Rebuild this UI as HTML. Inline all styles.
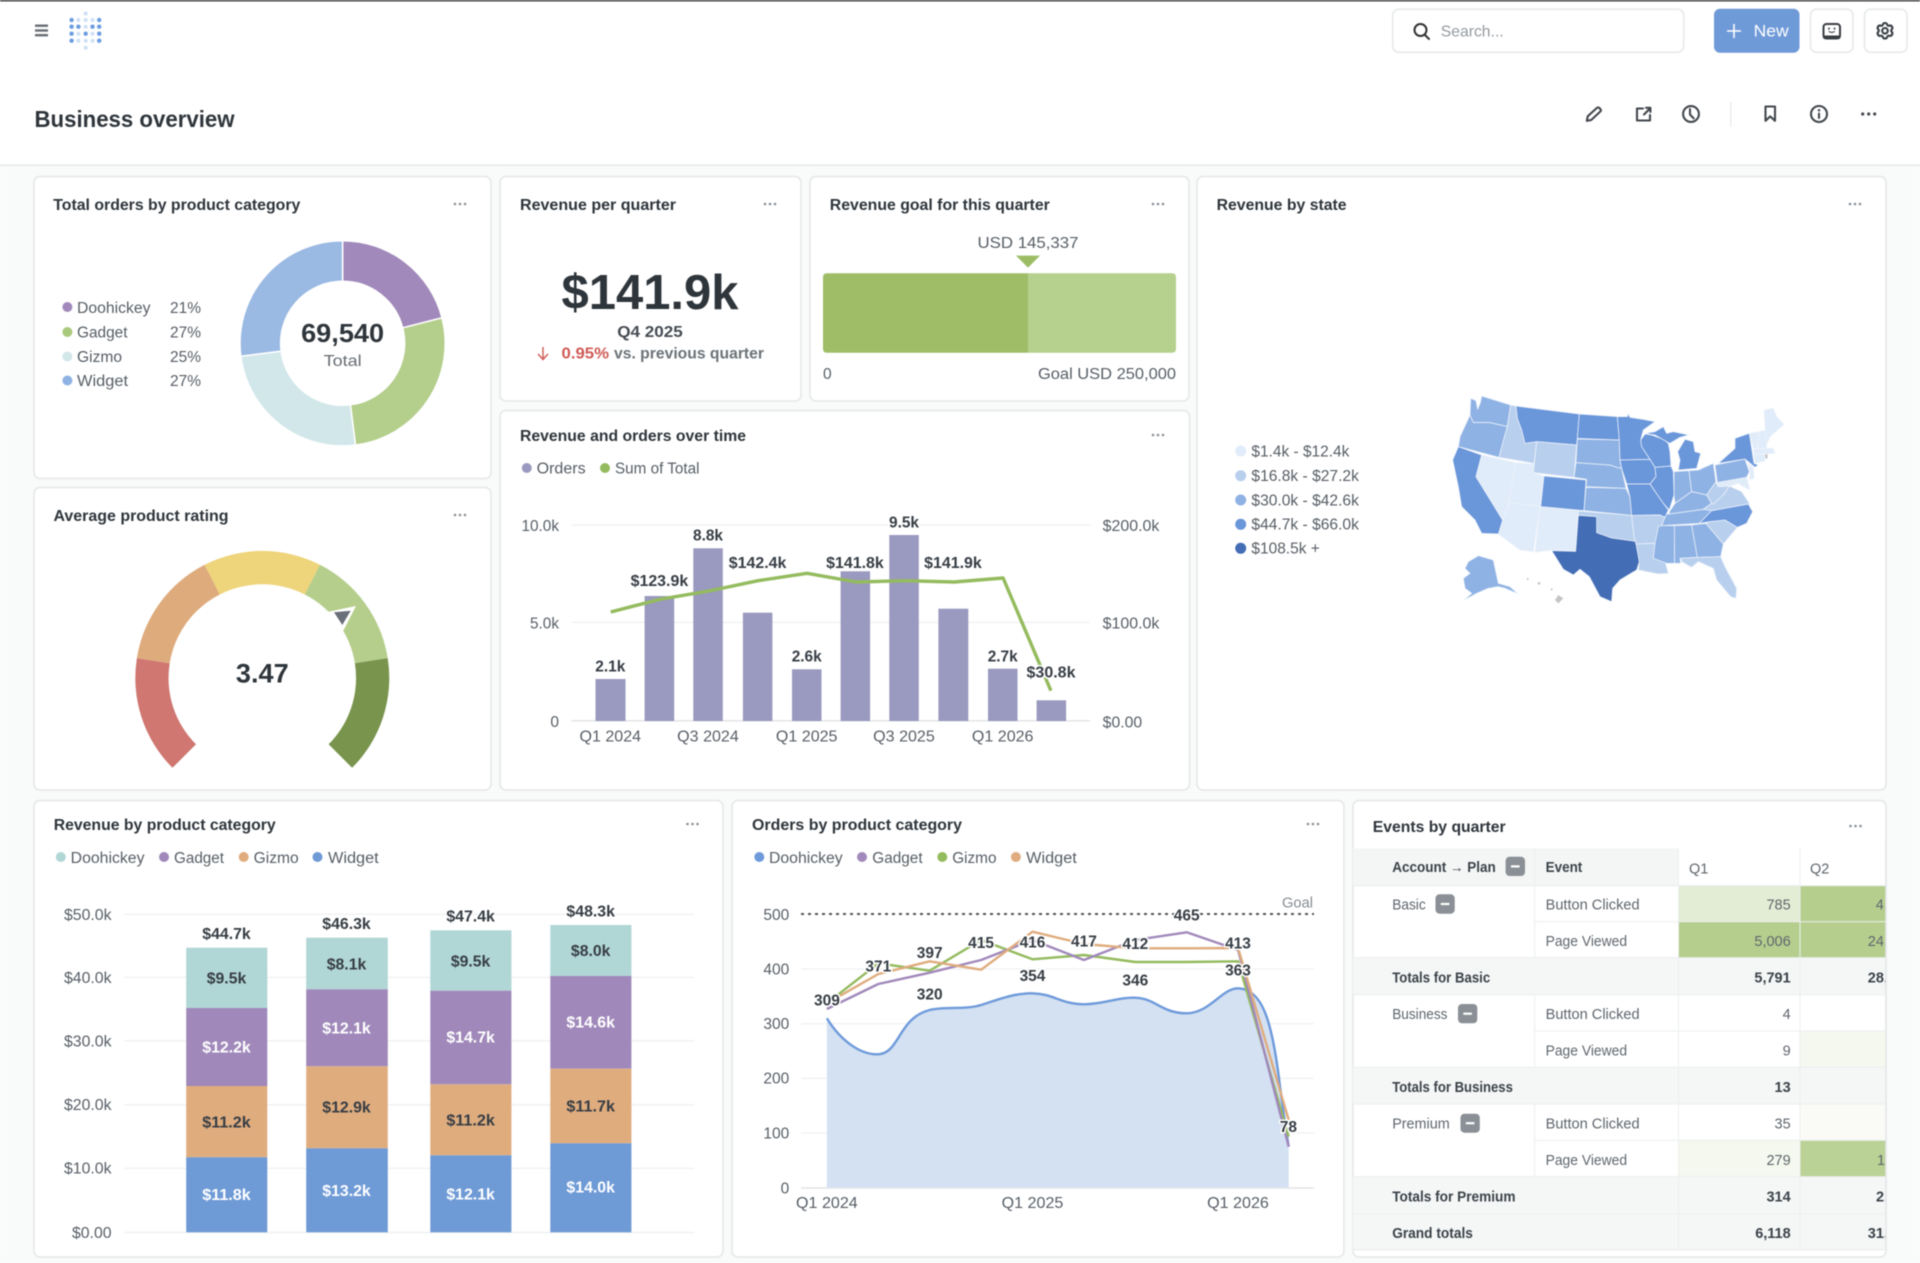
<!DOCTYPE html>
<html lang="en"><head><meta charset="utf-8"><title>Business overview</title>
<style>
html,body{margin:0;padding:0;background:#fff}
svg{display:block;filter:blur(.45px)}
text{font-family:"Liberation Sans",sans-serif}
.t{font-size:16px;font-weight:700;fill:#2E353B}
.a{font-size:15.5px;fill:#575E66}
.d{font-size:15.5px;font-weight:700;fill:#363D44}
.w{font-size:15.5px;font-weight:700;fill:#fff}
.h{paint-order:stroke;stroke:#fff;stroke-width:3px;stroke-linejoin:round}
.c{font-size:14.5px;fill:#5F666D}
.b{font-size:14.5px;font-weight:700;fill:#3B4248}
.m{fill:#8A9096}
.i{fill:none;stroke:#43484E;stroke-width:2.1;stroke-linecap:round;stroke-linejoin:round}
.card{fill:#fff;stroke:#E4E6E8;stroke-width:1.5}
.l1{fill:#E0ECF9}.l2{fill:#B8CFEE}.l3{fill:#8FB2E4}.l4{fill:#6A96DA}.l5{fill:#436DB5}
</style></head><body>
<svg xmlns="http://www.w3.org/2000/svg" width="1920" height="1263" viewBox="0 0 1920 1263">
<defs><clipPath id="tc"><rect x="1353" y="840" width="533" height="412"/></clipPath></defs>
<rect width="1920" height="1263" fill="#F9FAFA"/>
<rect width="1920" height="165" fill="#fff"/>
<rect y="164.5" width="1920" height="1.5" fill="#E6E8EA"/>
<rect width="1920" height="1.5" fill="#444"/>

<!-- nav -->
<g fill="#6A6F75"><rect x="35" y="24.5" width="13" height="2.4"/><rect x="35" y="29.3" width="13" height="2.4"/><rect x="35" y="34" width="13" height="2.4"/></g>
<g fill="#6B9DE0">
<circle cx="71.6" cy="20" r="2.2"/><circle cx="99.2" cy="20" r="2.2"/>
<circle cx="71.6" cy="26.7" r="2.2"/><circle cx="78.4" cy="26.7" r="2.2"/><circle cx="92.5" cy="26.7" r="2.2"/><circle cx="99.2" cy="26.7" r="2.2"/>
<circle cx="71.6" cy="33.7" r="2.2"/><circle cx="85.7" cy="33.7" r="2.2"/><circle cx="99.2" cy="33.7" r="2.2"/>
<circle cx="71.6" cy="40.7" r="2.2"/><circle cx="99.2" cy="40.7" r="2.2"/></g>
<g fill="#CFE0F6">
<circle cx="85.7" cy="13.5" r="2"/><circle cx="85.7" cy="47.7" r="2"/>
<circle cx="78.4" cy="20" r="2"/><circle cx="85.7" cy="20" r="2"/><circle cx="92.5" cy="20" r="2"/>
<circle cx="85.7" cy="26.7" r="2"/><circle cx="78.4" cy="33.7" r="2"/><circle cx="92.5" cy="33.7" r="2"/>
<circle cx="78.4" cy="40.7" r="2"/><circle cx="85.7" cy="40.7" r="2"/><circle cx="92.5" cy="40.7" r="2"/></g>

<rect x="1392.7" y="9.2" width="291" height="43" rx="6" fill="#fff" stroke="#E6E8EA" stroke-width="1.5"/>
<circle cx="1420.5" cy="30" r="6" fill="none" stroke="#333" stroke-width="2"/><path d="M1425 35 L1429 39" stroke="#333" stroke-width="2" stroke-linecap="round"/>
<text x="1440.7" y="36.5" font-size="16" fill="#949AA0" textLength="63" lengthAdjust="spacingAndGlyphs">Search...</text>
<rect x="1714" y="8.7" width="85.5" height="44" rx="6" fill="#6F9AD8"/>
<path d="M1727 31 H1741 M1734 24 V38" stroke="#fff" stroke-width="1.6"/>
<text x="1753.6" y="36.5" font-size="17" fill="#fff" textLength="35" lengthAdjust="spacingAndGlyphs">New</text>
<rect x="1810.5" y="9.2" width="42.5" height="43" rx="6" fill="#fff" stroke="#E6E8EA" stroke-width="1.5"/>
<rect x="1864.5" y="9.2" width="42.5" height="43" rx="6" fill="#fff" stroke="#E6E8EA" stroke-width="1.5"/>
<rect x="1823.5" y="24" width="16.5" height="14.5" rx="3" fill="none" stroke="#3A3F45" stroke-width="2"/>
<rect x="1823" y="35.5" width="17.5" height="3.4" rx="1.5" fill="#3A3F45"/>
<circle cx="1829" cy="28.6" r="1" fill="#3A3F45"/><circle cx="1834.5" cy="28.6" r="1" fill="#3A3F45"/><path d="M1828.7 31.3 Q1831.7 33.5 1834.8 31.3" fill="none" stroke="#3A3F45" stroke-width="1.1"/>
<path d="M1885 23 Q1886.8 23 1887.3 24.8 Q1887.7 26 1889 25.7 Q1891 25 1892 26.7 Q1893 28.4 1891.6 29.6 Q1890.6 30.5 1891.6 31.6 Q1893 33 1892 34.7 Q1891 36.4 1889 35.8 Q1887.7 35.4 1887.3 36.8 Q1886.8 38.6 1885 38.6 Q1883.2 38.6 1882.7 36.8 Q1882.3 35.4 1881 35.8 Q1879 36.4 1878 34.7 Q1877 33 1878.4 31.6 Q1879.4 30.5 1878.4 29.6 Q1877 28.4 1878 26.7 Q1879 25 1881 25.7 Q1882.3 26 1882.7 24.8 Q1883.2 23 1885 23 Z" fill="none" stroke="#3A3F45" stroke-width="2.1" stroke-linejoin="round"/>
<circle cx="1885" cy="30.8" r="2.8" fill="none" stroke="#3A3F45" stroke-width="2.1"/>

<!-- page header -->
<text x="34.5" y="127" font-size="23.5" font-weight="700" fill="#2E353B" textLength="200" lengthAdjust="spacingAndGlyphs">Business overview</text>
<path class="i" d="M1586.8 120.8 L1587.8 116.2 L1596.8 108 Q1598.2 106.8 1599.6 108.2 L1600.3 109 Q1601.5 110.4 1600.2 111.6 L1591.2 120 Z"/>
<path class="i" d="M1643 108.5 H1637 V120.5 H1650 V115 M1644 114.5 L1650 108.5 M1646 107.8 H1650.4 V112"/>
<circle class="i" cx="1691" cy="114" r="7.9"/><path class="i" d="M1690 109 V114.5 L1693.7 118.4"/>
<rect x="1730.2" y="102" width="1.2" height="25" fill="#E6E8EA"/>
<path class="i" d="M1765.5 106.5 H1775 V120.8 L1770.2 116.4 L1765.5 120.8 Z"/>
<circle class="i" cx="1819" cy="114" r="8"/><circle cx="1819" cy="110.3" r="1.25" fill="#43484E"/><path class="i" d="M1819 113.5 V118"/>
<g fill="#43484E"><circle cx="1862.7" cy="114" r="1.6"/><circle cx="1868.7" cy="114" r="1.6"/><circle cx="1874.7" cy="114" r="1.6"/></g>

<!-- cards -->
<rect class="card" x="34" y="176.5" width="457" height="302" rx="6"/>
<rect class="card" x="34" y="487.5" width="457" height="302.5" rx="6"/>
<rect class="card" x="500" y="176.5" width="301" height="224.5" rx="6"/>
<rect class="card" x="810" y="176.5" width="379" height="224.5" rx="6"/>
<rect class="card" x="500" y="410.5" width="689.5" height="379.5" rx="6"/>
<rect class="card" x="1197" y="176.5" width="689" height="613.5" rx="6"/>
<rect class="card" x="34" y="800.5" width="689" height="456.5" rx="6"/>
<rect class="card" x="732" y="800.5" width="612" height="456.5" rx="6"/>
<rect class="card" x="1353" y="800.5" width="533" height="456.5" rx="6"/>

<!-- titles -->
<text class="t" x="53.3" y="210" textLength="247" lengthAdjust="spacingAndGlyphs">Total orders by product category</text>
<text class="t" x="520" y="210" textLength="156" lengthAdjust="spacingAndGlyphs">Revenue per quarter</text>
<text class="t" x="829.8" y="210" textLength="220" lengthAdjust="spacingAndGlyphs">Revenue goal for this quarter</text>
<text class="t" x="1216.6" y="210" textLength="130" lengthAdjust="spacingAndGlyphs">Revenue by state</text>
<text class="t" x="53.5" y="521" textLength="175" lengthAdjust="spacingAndGlyphs">Average product rating</text>
<text class="t" x="520" y="441" textLength="226" lengthAdjust="spacingAndGlyphs">Revenue and orders over time</text>
<text class="t" x="53.7" y="830" textLength="222" lengthAdjust="spacingAndGlyphs">Revenue by product category</text>
<text class="t" x="752" y="830" textLength="210" lengthAdjust="spacingAndGlyphs">Orders by product category</text>
<text class="t" x="1372.7" y="832" textLength="133" lengthAdjust="spacingAndGlyphs">Events by quarter</text>

<!-- card dots -->
<g fill="#8A9096">
<circle cx="455" cy="204" r="1.3"/><circle cx="460" cy="204" r="1.3"/><circle cx="465" cy="204" r="1.3"/>
<circle cx="765" cy="204" r="1.3"/><circle cx="770" cy="204" r="1.3"/><circle cx="775" cy="204" r="1.3"/>
<circle cx="1153" cy="204" r="1.3"/><circle cx="1158" cy="204" r="1.3"/><circle cx="1163" cy="204" r="1.3"/>
<circle cx="1850" cy="204" r="1.3"/><circle cx="1855" cy="204" r="1.3"/><circle cx="1860" cy="204" r="1.3"/>
<circle cx="455" cy="515" r="1.3"/><circle cx="460" cy="515" r="1.3"/><circle cx="465" cy="515" r="1.3"/>
<circle cx="1153" cy="435" r="1.3"/><circle cx="1158" cy="435" r="1.3"/><circle cx="1163" cy="435" r="1.3"/>
<circle cx="687.5" cy="824" r="1.3"/><circle cx="692.5" cy="824" r="1.3"/><circle cx="697.5" cy="824" r="1.3"/>
<circle cx="1308" cy="824" r="1.3"/><circle cx="1313" cy="824" r="1.3"/><circle cx="1318" cy="824" r="1.3"/>
<circle cx="1850.5" cy="826" r="1.3"/><circle cx="1855.5" cy="826" r="1.3"/><circle cx="1860.5" cy="826" r="1.3"/>
</g>

<!-- donut -->
<g stroke="#fff" stroke-width="1.5">
<path fill="#A189BB" d="M342.6 240.7 A102.6 102.6 0 0 1 442 317.8 L402.7 327.9 A62 62 0 0 0 342.6 281.3 Z"/>
<path fill="#B4CE8B" d="M442 317.8 A102.6 102.6 0 0 1 355.5 445.1 L350.4 404.8 A62 62 0 0 0 402.7 327.9 Z"/>
<path fill="#D2E7EA" d="M355.5 445.1 A102.6 102.6 0 0 1 240.8 356.2 L281.1 351.1 A62 62 0 0 0 350.4 404.8 Z"/>
<path fill="#9AB9E3" d="M240.8 356.2 A102.6 102.6 0 0 1 342.6 240.7 L342.6 281.3 A62 62 0 0 0 281.1 351.1 Z"/>
</g>
<text x="342.6" y="342" text-anchor="middle" font-size="26" font-weight="700" fill="#2E353B" textLength="83" lengthAdjust="spacingAndGlyphs">69,540</text>
<text x="342.6" y="366" text-anchor="middle" font-size="15.5" fill="#666C72" textLength="38" lengthAdjust="spacingAndGlyphs">Total</text>
<circle cx="67.4" cy="307" r="5" fill="#A189BB"/><circle cx="67.4" cy="332" r="5" fill="#A9C97C"/><circle cx="67.4" cy="356.5" r="5" fill="#D2E7EA"/><circle cx="67.4" cy="380.5" r="5" fill="#8FB2E4"/>
<text class="a" x="77" y="313" textLength="73.5" lengthAdjust="spacingAndGlyphs">Doohickey</text>
<text class="a" x="77" y="337.5" textLength="50.5" lengthAdjust="spacingAndGlyphs">Gadget</text>
<text class="a" x="77" y="362" textLength="45" lengthAdjust="spacingAndGlyphs">Gizmo</text>
<text class="a" x="77" y="386" textLength="51" lengthAdjust="spacingAndGlyphs">Widget</text>
<text class="a" x="170" y="313" textLength="31" lengthAdjust="spacingAndGlyphs">21%</text>
<text class="a" x="170" y="337.5" textLength="31" lengthAdjust="spacingAndGlyphs">27%</text>
<text class="a" x="170" y="362" textLength="31" lengthAdjust="spacingAndGlyphs">25%</text>
<text class="a" x="170" y="386" textLength="31" lengthAdjust="spacingAndGlyphs">27%</text>

<!-- KPI -->
<text x="650" y="309" text-anchor="middle" font-size="49" font-weight="700" fill="#2E353B" textLength="177" lengthAdjust="spacingAndGlyphs">$141.9k</text>
<text x="650" y="337" text-anchor="middle" font-size="15.5" font-weight="700" fill="#454B52" textLength="65.5" lengthAdjust="spacingAndGlyphs">Q4 2025</text>
<path d="M543 347 V359 M538 354 L543 359.5 L548 354" fill="none" stroke="#D0605A" stroke-width="1.5"/>
<text x="561.5" y="358.5" font-size="15.5" font-weight="700" fill="#CF5A55" textLength="47.5" lengthAdjust="spacingAndGlyphs">0.95%</text>
<text x="614" y="358.5" font-size="15.5" font-weight="700" fill="#6C7378" textLength="150" lengthAdjust="spacingAndGlyphs">vs. previous quarter</text>

<!-- goal -->
<text class="a" x="1028" y="248" text-anchor="middle" textLength="101" lengthAdjust="spacingAndGlyphs">USD 145,337</text>
<path d="M1016 255.6 H1040 L1028 267.6 Z" fill="#9BBC63"/>
<path d="M827 273.3 H1028 V352.7 H827 Q823 352.7 823 348.7 V277.3 Q823 273.3 827 273.3 Z" fill="#9FBD67"/>
<path d="M1028 273.3 H1172 Q1176 273.3 1176 277.3 V348.7 Q1176 352.7 1172 352.7 H1028 Z" fill="#B6D08D"/>
<text class="a" x="823" y="379">0</text>
<text class="a" x="1176" y="379" text-anchor="end" textLength="138" lengthAdjust="spacingAndGlyphs">Goal USD 250,000</text>

<!-- gauge -->
<path fill="#CF7770" d="M172.5 767.8 A127 127 0 0 1 136.9 658.1 L169.7 663.3 A93.7 93.7 0 0 0 196 744.3 Z"/>
<path fill="#DEAB7D" d="M136.9 658.1 A127 127 0 0 1 204.6 564.8 L219.8 594.5 A93.7 93.7 0 0 0 169.7 663.3 Z"/>
<path fill="#EED47B" d="M204.6 564.8 A127 127 0 0 1 320 564.8 L304.8 594.5 A93.7 93.7 0 0 0 219.8 594.5 Z"/>
<path fill="#B5CE8B" d="M320 564.8 A127 127 0 0 1 387.7 658.1 L354.9 663.3 A93.7 93.7 0 0 0 304.8 594.5 Z"/>
<path fill="#79944D" d="M387.7 658.1 A127 127 0 0 1 352.1 767.8 L328.6 744.3 A93.7 93.7 0 0 0 354.9 663.3 Z"/>
<path d="M328.3 611.7 L356 606 L343.3 630.7 Z" fill="#fff"/>
<path d="M334 612.3 L350.7 610.7 L342.3 625 Z" fill="#6A6F7A"/>
<text x="262.3" y="682.7" text-anchor="middle" font-size="27" font-weight="700" fill="#2E353B" textLength="52.7" lengthAdjust="spacingAndGlyphs">3.47</text>

<!-- combo chart -->
<circle cx="526.8" cy="468" r="5" fill="#9A99BF"/><circle cx="605" cy="468" r="5" fill="#94BB5E"/>
<text class="a" x="536.6" y="473.5" textLength="49" lengthAdjust="spacingAndGlyphs">Orders</text>
<text class="a" x="615" y="473.5" textLength="84.5" lengthAdjust="spacingAndGlyphs">Sum of Total</text>
<g fill="#EEF0F1"><rect x="571.4" y="524.5" width="518.6" height="1.2"/><rect x="571.4" y="621.8" width="518.6" height="1.2"/><rect x="571.4" y="720" width="518.6" height="1.6" fill="#E4E6E8"/></g>
<g fill="#9A99BF">
<rect x="595.5" y="679" width="30" height="42"/><rect x="644.6" y="596" width="29.6" height="125"/><rect x="693.3" y="548.3" width="29.5" height="172.7"/><rect x="742.9" y="612.7" width="29.5" height="108.3"/><rect x="792" y="669.3" width="29.5" height="51.7"/><rect x="840.6" y="571.3" width="29.5" height="149.7"/><rect x="889.3" y="535" width="29.5" height="186"/><rect x="938.4" y="608.7" width="29.9" height="112.3"/><rect x="988" y="668.7" width="29.5" height="52.3"/><rect x="1036.6" y="700.3" width="29.5" height="20.7"/></g>
<polyline points="610.7,612 659.8,599.3 708.9,591 758,580.7 807.1,573.3 856.3,582 905.4,580.7 954,582 1003.1,578 1050.9,690.7" fill="none" stroke="#94BB5E" stroke-width="3.4" stroke-linejoin="round"/>
<g class="a" text-anchor="end">
<text x="559" y="531" textLength="37.5" lengthAdjust="spacingAndGlyphs">10.0k</text>
<text x="559" y="628.5" textLength="29" lengthAdjust="spacingAndGlyphs">5.0k</text>
<text x="559" y="727">0</text></g>
<g class="a">
<text x="1102.7" y="531" textLength="56.7" lengthAdjust="spacingAndGlyphs">$200.0k</text>
<text x="1102.7" y="628.5" textLength="56.7" lengthAdjust="spacingAndGlyphs">$100.0k</text>
<text x="1102.7" y="727.5" textLength="39.5" lengthAdjust="spacingAndGlyphs">$0.00</text>
<g text-anchor="middle">
<text x="610.3" y="741.5" textLength="61.6" lengthAdjust="spacingAndGlyphs">Q1 2024</text>
<text x="708" y="741.5" textLength="61.6" lengthAdjust="spacingAndGlyphs">Q3 2024</text>
<text x="806.7" y="741.5" textLength="61.6" lengthAdjust="spacingAndGlyphs">Q1 2025</text>
<text x="904" y="741.5" textLength="61.6" lengthAdjust="spacingAndGlyphs">Q3 2025</text>
<text x="1002.7" y="741.5" textLength="61.6" lengthAdjust="spacingAndGlyphs">Q1 2026</text>
</g></g>
<g class="d" text-anchor="middle">
<text class="h" x="610.3" y="671.5" textLength="30" lengthAdjust="spacingAndGlyphs">2.1k</text>
<text class="h" x="659.4" y="586" textLength="57.6" lengthAdjust="spacingAndGlyphs">$123.9k</text>
<text class="h" x="708" y="540.5" textLength="30" lengthAdjust="spacingAndGlyphs">8.8k</text>
<text class="h" x="757.6" y="568" textLength="57.6" lengthAdjust="spacingAndGlyphs">$142.4k</text>
<text class="h" x="806.7" y="661.5" textLength="30" lengthAdjust="spacingAndGlyphs">2.6k</text>
<text class="h" x="855" y="568" textLength="57.6" lengthAdjust="spacingAndGlyphs">$141.8k</text>
<text class="h" x="904" y="527.5" textLength="30" lengthAdjust="spacingAndGlyphs">9.5k</text>
<text class="h" x="953" y="568" textLength="57.6" lengthAdjust="spacingAndGlyphs">$141.9k</text>
<text class="h" x="1002.7" y="661.5" textLength="30" lengthAdjust="spacingAndGlyphs">2.7k</text>
<text class="h" x="1051" y="677.5" textLength="49" lengthAdjust="spacingAndGlyphs">$30.8k</text>
</g>

<!-- map legend -->
<circle class="l1" cx="1240.7" cy="451" r="5.5"/><circle class="l2" cx="1240.7" cy="475.7" r="5.5"/><circle class="l3" cx="1240.7" cy="500" r="5.5"/><circle class="l4" cx="1240.7" cy="524.3" r="5.5"/><circle class="l5" cx="1240.7" cy="548.3" r="5.5"/>
<text class="a" x="1251.4" y="456.5" textLength="98" lengthAdjust="spacingAndGlyphs">$1.4k - $12.4k</text>
<text class="a" x="1251.4" y="481" textLength="107.5" lengthAdjust="spacingAndGlyphs">$16.8k - $27.2k</text>
<text class="a" x="1251.4" y="505.5" textLength="107.5" lengthAdjust="spacingAndGlyphs">$30.0k - $42.6k</text>
<text class="a" x="1251.4" y="529.5" textLength="107.5" lengthAdjust="spacingAndGlyphs">$44.7k - $66.0k</text>
<text class="a" x="1251.4" y="553.5" textLength="68.4" lengthAdjust="spacingAndGlyphs">$108.5k +</text>

<!-- map -->
<g transform="translate(1430 380) scale(.33333)" stroke="#EEF3FB" stroke-width="2.2" stroke-linejoin="round">
<polygon class="l3" points="122,55 138,62 143,88 151,68 155,48 242,75 232,140 180,128 130,128 120,105"/>
<polygon class="l3" points="120,105 130,128 180,128 232,140 222,175 207,232 85,200 90,170"/>
<polygon class="l2" points="242,75 258,78 262,115 275,150 285,190 320,185 312,250 207,232 222,175 232,140"/>
<polygon class="l4" points="258,78 448,102 442,175 440,195 320,185 285,190 275,150 262,115"/>
<polygon class="l2" points="320,185 440,195 432,292 310,278"/>
<polygon class="l4" points="85,200 155,225 138,290 218,420 208,462 155,460 135,420 95,380 85,320 68,240"/>
<polygon class="l1" points="155,225 258,248 232,385 218,420 138,290"/>
<polygon class="l1" points="258,248 312,252 310,278 342,288 330,380 238,367 232,385"/>
<polygon class="l1" points="232,385 238,367 330,380 310,515 270,510 205,462 218,420"/>
<polygon class="l4" points="342,288 468,300 462,392 332,380"/>
<polygon class="l1" points="330,380 445,392 437,513 365,510 315,517"/>
<polygon class="l2" points="445,393 605,406 612,470 618,492 575,482 540,474 500,458 500,410 445,406"/>
<polygon class="l5" points="445,406 500,410 500,458 545,474 618,484 628,545 620,570 570,600 548,625 545,665 510,650 478,590 450,568 430,585 400,568 365,512 437,514"/>
<polygon class="l3" points="468,322 588,325 600,350 605,406 462,392"/>
<polygon class="l3" points="438,248 540,255 560,262 575,265 588,325 468,320 470,298 432,292"/>
<polygon class="l3" points="442,177 568,180 570,240 575,265 560,262 540,255 438,248"/>
<polygon class="l4" points="448,102 562,110 568,180 442,175"/>
<polygon class="l4" points="562,110 592,110 595,100 600,112 640,118 675,125 640,150 632,180 635,200 660,238 570,240 568,180"/>
<polygon class="l4" points="570,240 660,238 675,262 678,290 660,312 590,312 575,265"/>
<polygon class="l4" points="590,312 660,312 700,370 715,390 705,412 690,405 605,406 600,350"/>
<polygon class="l2" points="605,406 690,405 705,412 695,437 675,490 618,492 612,470"/>
<polygon class="l2" points="618,492 675,490 670,535 705,545 715,580 685,582 625,570 628,545"/>
<polygon class="l4" points="632,180 645,162 665,165 700,178 715,190 720,215 723,258 675,262 660,238 635,200"/>
<polygon class="l4" points="645,160 675,155 700,140 710,160 730,155 777,165 750,172 720,190 710,185 675,165"/>
<polygon class="l4" points="745,270 750,240 743,215 765,178 790,185 795,215 812,220 800,265"/>
<polygon class="l4" points="675,262 723,258 730,275 732,345 718,390 700,370 660,312 678,290"/>
<polygon class="l3" points="732,275 777,272 785,335 735,370 732,345"/>
<polygon class="l3" points="777,272 805,270 850,250 858,305 830,345 785,335"/>
<polygon class="l3" points="718,395 735,370 785,335 830,345 845,370 820,388 718,402"/>
<polygon class="l3" points="710,402 718,402 820,388 850,390 808,430 695,437 705,412"/>
<polygon class="l3" points="685,440 695,437 733,437 734,550 710,550 670,535 675,490"/>
<polygon class="l3" points="733,437 785,435 802,532 750,535 752,550 734,550"/>
<polygon class="l3" points="785,435 828,430 880,492 872,530 802,532"/>
<polygon class="l2" points="752,535 802,532 872,530 885,560 920,625 918,655 902,650 860,600 850,565 805,545 785,562 755,545"/>
<polygon class="l2" points="828,430 840,425 885,420 922,442 880,492"/>
<polygon class="l4" points="808,430 845,392 955,372 968,395 950,430 922,442 885,420 840,425"/>
<polygon class="l2" points="820,388 845,370 880,345 898,318 935,335 958,370 955,372 845,392"/>
<polygon class="l2" points="830,345 858,305 865,320 898,318 880,345 850,372 845,370"/>
<polygon class="l3" points="855,255 945,237 958,275 950,292 862,308"/>
<polygon class="l4" points="865,250 915,205 915,175 958,160 972,250 985,255 975,262 945,237"/>
<polygon class="l1" points="955,250 970,262 972,295 958,300 960,280"/>
<polygon class="l1" points="862,308 950,292 960,330 940,320 925,310 898,318 865,320"/>
<polygon class="l1" points="958,160 988,155 982,205 970,205"/>
<polygon class="l1" points="988,155 1008,150 1010,205 982,205"/>
<polygon class="l1" points="1002,90 1030,85 1040,110 1062,133 1020,170 1010,195 1005,140"/>
<polygon class="l1" points="970,207 1030,205 1035,220 972,222"/>
<polygon class="l1" points="972,222 1005,222 1005,243 975,250"/>
<polygon fill="#BFBFBF" points="1005,222 1013,222 1013,236 1005,236"/>
<polygon class="l3" points="115,545 145,527 190,540 205,610 240,620 265,642 225,625 205,620 175,625 140,640 100,662 125,640 105,625 100,595 120,580 105,565"/>
<g fill="#C5C5C5" stroke="none"><polygon points="385,645 400,655 385,670 375,660"/><circle cx="293" cy="597" r="3"/><circle cx="327" cy="610" r="4"/><circle cx="365" cy="628" r="3"/></g>
</g>

<!-- stacked chart -->
<circle cx="60.8" cy="857" r="5" fill="#B1D6D6"/><circle cx="164" cy="857" r="5" fill="#A089BA"/><circle cx="243.7" cy="857" r="5" fill="#DFAC7E"/><circle cx="317.5" cy="857" r="5" fill="#6E9AD6"/>
<text class="a" x="70.7" y="863" textLength="73.8" lengthAdjust="spacingAndGlyphs">Doohickey</text>
<text class="a" x="174" y="863" textLength="50" lengthAdjust="spacingAndGlyphs">Gadget</text>
<text class="a" x="253.7" y="863" textLength="45" lengthAdjust="spacingAndGlyphs">Gizmo</text>
<text class="a" x="328" y="863" textLength="50.7" lengthAdjust="spacingAndGlyphs">Widget</text>
<g fill="#EEF0F1"><rect x="124" y="913.8" width="570" height="1.2"/><rect x="124" y="976.8" width="570" height="1.2"/><rect x="124" y="1040.2" width="570" height="1.2"/><rect x="124" y="1104.2" width="570" height="1.2"/><rect x="124" y="1167.8" width="570" height="1.2"/><rect x="124" y="1231.8" width="570" height="1.4"/></g>
<g class="a" text-anchor="end">
<text x="111.5" y="920" textLength="47.5" lengthAdjust="spacingAndGlyphs">$50.0k</text>
<text x="111.5" y="983" textLength="47.5" lengthAdjust="spacingAndGlyphs">$40.0k</text>
<text x="111.5" y="1046.5" textLength="47.5" lengthAdjust="spacingAndGlyphs">$30.0k</text>
<text x="111.5" y="1110" textLength="47.5" lengthAdjust="spacingAndGlyphs">$20.0k</text>
<text x="111.5" y="1173.5" textLength="47.5" lengthAdjust="spacingAndGlyphs">$10.0k</text>
<text x="111.5" y="1238" textLength="39.5" lengthAdjust="spacingAndGlyphs">$0.00</text></g>
<g>
<rect fill="#B1D6D6" x="186.2" y="947.7" width="81.1" height="60.3"/><rect fill="#A089BA" x="186.2" y="1008" width="81.1" height="78"/><rect fill="#DFAC7E" x="186.2" y="1086" width="81.1" height="71.3"/><rect fill="#6E9AD6" x="186.2" y="1157.3" width="81.1" height="75"/>
<rect fill="#B1D6D6" x="306.2" y="937.7" width="81.6" height="51.6"/><rect fill="#A089BA" x="306.2" y="989.3" width="81.6" height="77"/><rect fill="#DFAC7E" x="306.2" y="1066.3" width="81.6" height="82"/><rect fill="#6E9AD6" x="306.2" y="1148.3" width="81.6" height="84"/>
<rect fill="#B1D6D6" x="430.3" y="930.3" width="81.1" height="60.4"/><rect fill="#A089BA" x="430.3" y="990.7" width="81.1" height="93.6"/><rect fill="#DFAC7E" x="430.3" y="1084.3" width="81.1" height="71"/><rect fill="#6E9AD6" x="430.3" y="1155.3" width="81.1" height="77"/>
<rect fill="#B1D6D6" x="550.3" y="925" width="81.1" height="51"/><rect fill="#A089BA" x="550.3" y="976" width="81.1" height="92.7"/><rect fill="#DFAC7E" x="550.3" y="1068.7" width="81.1" height="74.6"/><rect fill="#6E9AD6" x="550.3" y="1143.3" width="81.1" height="89"/>
</g>
<g text-anchor="middle">
<text class="d" x="226.5" y="939" textLength="48.5" lengthAdjust="spacingAndGlyphs">$44.7k</text>
<text class="d" x="346.5" y="929" textLength="48.5" lengthAdjust="spacingAndGlyphs">$46.3k</text>
<text class="d" x="470.6" y="921.5" textLength="48.5" lengthAdjust="spacingAndGlyphs">$47.4k</text>
<text class="d" x="590.7" y="916.3" textLength="48.5" lengthAdjust="spacingAndGlyphs">$48.3k</text>
<text class="d" x="226.5" y="983.5" textLength="39.5" lengthAdjust="spacingAndGlyphs">$9.5k</text>
<text class="w" x="226.5" y="1052.5" textLength="48.5" lengthAdjust="spacingAndGlyphs">$12.2k</text>
<text class="d" x="226.5" y="1127.3" textLength="48.5" lengthAdjust="spacingAndGlyphs">$11.2k</text>
<text class="w" x="226.5" y="1200" textLength="48.5" lengthAdjust="spacingAndGlyphs">$11.8k</text>
<text class="d" x="346.5" y="969.3" textLength="39.5" lengthAdjust="spacingAndGlyphs">$8.1k</text>
<text class="w" x="346.5" y="1033.3" textLength="48.5" lengthAdjust="spacingAndGlyphs">$12.1k</text>
<text class="d" x="346.5" y="1112.7" textLength="48.5" lengthAdjust="spacingAndGlyphs">$12.9k</text>
<text class="w" x="346.5" y="1196" textLength="48.5" lengthAdjust="spacingAndGlyphs">$13.2k</text>
<text class="d" x="470.6" y="966.3" textLength="39.5" lengthAdjust="spacingAndGlyphs">$9.5k</text>
<text class="w" x="470.6" y="1042.7" textLength="48.5" lengthAdjust="spacingAndGlyphs">$14.7k</text>
<text class="d" x="470.6" y="1125.3" textLength="48.5" lengthAdjust="spacingAndGlyphs">$11.2k</text>
<text class="w" x="470.6" y="1199.3" textLength="48.5" lengthAdjust="spacingAndGlyphs">$12.1k</text>
<text class="d" x="590.7" y="956" textLength="39.5" lengthAdjust="spacingAndGlyphs">$8.0k</text>
<text class="w" x="590.7" y="1027.7" textLength="48.5" lengthAdjust="spacingAndGlyphs">$14.6k</text>
<text class="d" x="590.7" y="1111.3" textLength="48.5" lengthAdjust="spacingAndGlyphs">$11.7k</text>
<text class="w" x="590.7" y="1192.7" textLength="48.5" lengthAdjust="spacingAndGlyphs">$14.0k</text>
</g>

<!-- line chart -->
<circle cx="759.3" cy="857" r="5" fill="#6E9ADB"/><circle cx="862" cy="857" r="5" fill="#A189BB"/><circle cx="942.3" cy="857" r="5" fill="#94BB5E"/><circle cx="1015.9" cy="857" r="5" fill="#DFAC7E"/>
<text class="a" x="769" y="863" textLength="73.7" lengthAdjust="spacingAndGlyphs">Doohickey</text>
<text class="a" x="872.3" y="863" textLength="50.3" lengthAdjust="spacingAndGlyphs">Gadget</text>
<text class="a" x="952.2" y="863" textLength="44.3" lengthAdjust="spacingAndGlyphs">Gizmo</text>
<text class="a" x="1026.2" y="863" textLength="50.6" lengthAdjust="spacingAndGlyphs">Widget</text>
<g fill="#EEF0F1"><rect x="801" y="968.4" width="513" height="1.2"/><rect x="801" y="1023.1" width="513" height="1.2"/><rect x="801" y="1077.7" width="513" height="1.2"/><rect x="801" y="1132.4" width="513" height="1.2"/><rect x="801" y="1187.2" width="513" height="1.6" fill="#E4E6E8"/></g>
<path d="M801 914 H1314" stroke="#555" stroke-width="2" stroke-dasharray="3 4" fill="none"/>
<g class="a" text-anchor="end">
<text x="789.3" y="920">500</text><text x="789.3" y="974.5">400</text><text x="789.3" y="1029">300</text><text x="789.3" y="1083.5">200</text><text x="789.3" y="1138.5">100</text><text x="789.3" y="1193.5">0</text></g>
<text x="1313" y="907.5" text-anchor="end" font-size="15" fill="#858B91" textLength="31" lengthAdjust="spacingAndGlyphs">Goal</text>
<path d="M826.9 1018.3 C840 1040 860 1055 878.3 1054.3 C900 1053 898 1018 929.7 1010 C945 1006 965 1010 981.1 1005 C1000 999 1015 993 1032.5 993.3 C1055 994 1060 1004 1083.9 1004.3 C1105 1004 1118 997 1135.3 997.7 C1155 998 1162 1013.5 1186.7 1013.3 C1210 1013 1222 988 1238.1 988.3 C1262 989 1272 1020 1279.6 1083.3 C1283 1110 1286 1130 1288.7 1146.7 V1187.5 H826.9 Z" fill="#D3E1F2"/>
<path d="M826.9 1018.3 C840 1040 860 1055 878.3 1054.3 C900 1053 898 1018 929.7 1010 C945 1006 965 1010 981.1 1005 C1000 999 1015 993 1032.5 993.3 C1055 994 1060 1004 1083.9 1004.3 C1105 1004 1118 997 1135.3 997.7 C1155 998 1162 1013.5 1186.7 1013.3 C1210 1013 1222 988 1238.1 988.3 C1262 989 1272 1020 1279.6 1083.3 C1283 1110 1286 1130 1288.7 1146.7" fill="none" stroke="#6E9ADB" stroke-width="2.4"/>
<polyline fill="none" stroke="#94BB5E" stroke-width="2.4" stroke-linejoin="round" points="826.9,1003.3 878.3,963.3 929.7,970.7 981.1,940 1032.5,959.3 1083.9,955 1135.3,962 1186.7,962 1238.1,961.3 1288.7,1136.7"/>
<polyline fill="none" stroke="#A189BB" stroke-width="2.4" stroke-linejoin="round" points="826.9,1009 878.3,984 929.7,972.7 981.1,960 1032.5,940 1083.9,960 1135.3,940 1186.7,932.3 1238.1,950 1288.7,1146.7"/>
<polyline fill="none" stroke="#DFAC7E" stroke-width="2.4" stroke-linejoin="round" points="826.9,1003.3 878.3,974 929.7,961.3 981.1,969.7 1032.5,931.7 1083.9,944 1135.3,948.3 1186.7,948.3 1238.1,948 1288.7,1120"/>
<g class="d" text-anchor="middle">
<text class="h" x="826.9" y="1005.5">309</text><text class="h" x="878.3" y="971.5">371</text><text class="h" x="929.7" y="958">397</text><text class="h" x="981.1" y="948">415</text><text class="h" x="1032.5" y="947.5">416</text><text class="h" x="1083.9" y="946.5">417</text><text class="h" x="1135.3" y="949">412</text><text class="h" x="1186.7" y="920.5">465</text><text class="h" x="1238" y="948.5">413</text><text class="h" x="1288.4" y="1132">78</text><text class="h" x="929.7" y="999.5">320</text><text class="h" x="1032.5" y="981">354</text><text class="h" x="1135.3" y="985.5">346</text><text class="h" x="1238" y="975.5">363</text></g>
<g class="a" text-anchor="middle">
<text x="826.9" y="1208" textLength="61.7" lengthAdjust="spacingAndGlyphs">Q1 2024</text>
<text x="1032.5" y="1208" textLength="61.7" lengthAdjust="spacingAndGlyphs">Q1 2025</text>
<text x="1238" y="1208" textLength="61.7" lengthAdjust="spacingAndGlyphs">Q1 2026</text></g>

<!-- table -->
<g clip-path="url(#tc)">
<rect x="1353" y="848.3" width="325.4" height="37" fill="#F4F6F6"/>
<g fill="#F5F7F7"><rect x="1353" y="957.7" width="533" height="37"/><rect x="1353" y="1067.3" width="533" height="36.7"/><rect x="1353" y="1176.7" width="533" height="73"/></g>
<rect x="1678.4" y="885.7" width="121.6" height="36" fill="#E3ECD4"/>
<rect x="1800" y="885.7" width="86" height="36" fill="#B5CE8E"/>
<rect x="1678.4" y="921.7" width="207.6" height="36" fill="#B5CE8E"/>
<rect x="1800" y="1031" width="86" height="36.3" fill="#F5F8EF"/>
<rect x="1800" y="1104" width="86" height="36.3" fill="#FAFBF7"/>
<rect x="1678.4" y="1140.3" width="121.6" height="36.4" fill="#F4F8EE"/>
<rect x="1800" y="1140.3" width="86" height="36.4" fill="#BBD296"/>
<g fill="#ECEEEF">
<rect x="1353" y="885" width="533" height="1.2"/><rect x="1534.7" y="921.2" width="351" height="1"/><rect x="1353" y="957.2" width="533" height="1"/><rect x="1353" y="994.2" width="533" height="1"/><rect x="1534.7" y="1030.5" width="351" height="1"/><rect x="1353" y="1066.8" width="533" height="1"/><rect x="1353" y="1103.5" width="533" height="1"/><rect x="1534.7" y="1139.8" width="351" height="1"/><rect x="1353" y="1176.2" width="533" height="1"/><rect x="1353" y="1213.2" width="533" height="1"/><rect x="1353" y="1249.2" width="533" height="1.2"/>
<rect x="1534.2" y="848.3" width="1" height="109"/><rect x="1534.2" y="994.7" width="1" height="72.6"/><rect x="1534.2" y="1104" width="1" height="72.7"/>
<rect x="1678" y="848.3" width="1" height="401"/><rect x="1799.5" y="848.3" width="1" height="401"/></g>

<text class="b" x="1392.2" y="872" textLength="103.6" lengthAdjust="spacingAndGlyphs">Account → Plan</text>
<text class="b" x="1545.6" y="872" textLength="36.7" lengthAdjust="spacingAndGlyphs">Event</text>
<text class="c" x="1689" y="873.5">Q1</text><text class="c" x="1810" y="873.5">Q2</text>
<rect class="m" x="1505.6" y="856.7" width="19.4" height="19.3" rx="4"/><rect x="1511" y="865.3" width="8.6" height="2.2" fill="#fff"/>
<text class="c" x="1392.2" y="909.5" textLength="33.5" lengthAdjust="spacingAndGlyphs">Basic</text>
<rect class="m" x="1435.5" y="894.3" width="19.2" height="19.4" rx="4"/><rect x="1440.8" y="902.9" width="8.6" height="2.2" fill="#fff"/>
<text class="c" x="1392.2" y="1019" textLength="55.3" lengthAdjust="spacingAndGlyphs">Business</text>
<rect class="m" x="1458" y="1004" width="19.3" height="19.3" rx="4"/><rect x="1463.3" y="1012.6" width="8.6" height="2.2" fill="#fff"/>
<text class="c" x="1392.2" y="1128.5" textLength="57.5" lengthAdjust="spacingAndGlyphs">Premium</text>
<rect class="m" x="1460.5" y="1113.7" width="19.3" height="19" rx="4"/><rect x="1465.8" y="1122.1" width="8.6" height="2.2" fill="#fff"/>
<text class="c" x="1545.6" y="909.5" textLength="94" lengthAdjust="spacingAndGlyphs">Button Clicked</text>
<text class="c" x="1545.6" y="946" textLength="81.5" lengthAdjust="spacingAndGlyphs">Page Viewed</text>
<text class="c" x="1545.6" y="1019" textLength="94" lengthAdjust="spacingAndGlyphs">Button Clicked</text>
<text class="c" x="1545.6" y="1055.5" textLength="81.5" lengthAdjust="spacingAndGlyphs">Page Viewed</text>
<text class="c" x="1545.6" y="1128.5" textLength="94" lengthAdjust="spacingAndGlyphs">Button Clicked</text>
<text class="c" x="1545.6" y="1165" textLength="81.5" lengthAdjust="spacingAndGlyphs">Page Viewed</text>
<text class="b" x="1392.2" y="982.5" textLength="98" lengthAdjust="spacingAndGlyphs">Totals for Basic</text>
<text class="b" x="1392.2" y="1092" textLength="120.7" lengthAdjust="spacingAndGlyphs">Totals for Business</text>
<text class="b" x="1392.2" y="1201.5" textLength="123.3" lengthAdjust="spacingAndGlyphs">Totals for Premium</text>
<text class="b" x="1392.2" y="1238" textLength="80.7" lengthAdjust="spacingAndGlyphs">Grand totals</text>
<g text-anchor="end">
<text class="c" x="1790.7" y="909.5">785</text><text class="c" x="1790.7" y="946">5,006</text><text class="b" x="1790.7" y="982.5">5,791</text><text class="c" x="1790.7" y="1019">4</text><text class="c" x="1790.7" y="1055.5">9</text><text class="b" x="1790.7" y="1092">13</text><text class="c" x="1790.7" y="1128.5">35</text><text class="c" x="1790.7" y="1165">279</text><text class="b" x="1790.7" y="1201.5">314</text><text class="b" x="1790.7" y="1238">6,118</text></g>
<text class="c" x="1875.8" y="909.5">4,</text><text class="c" x="1867.8" y="946">24,</text><text class="b" x="1867.8" y="982.5">28,</text><text class="c" x="1877" y="1165">1,</text><text class="b" x="1876" y="1201.5">2,</text><text class="b" x="1867.8" y="1238">31,</text>
</g>
<rect x="1885.2" y="840" width="1.5" height="410" fill="#E4E6E8"/>
</svg>
</body></html>
